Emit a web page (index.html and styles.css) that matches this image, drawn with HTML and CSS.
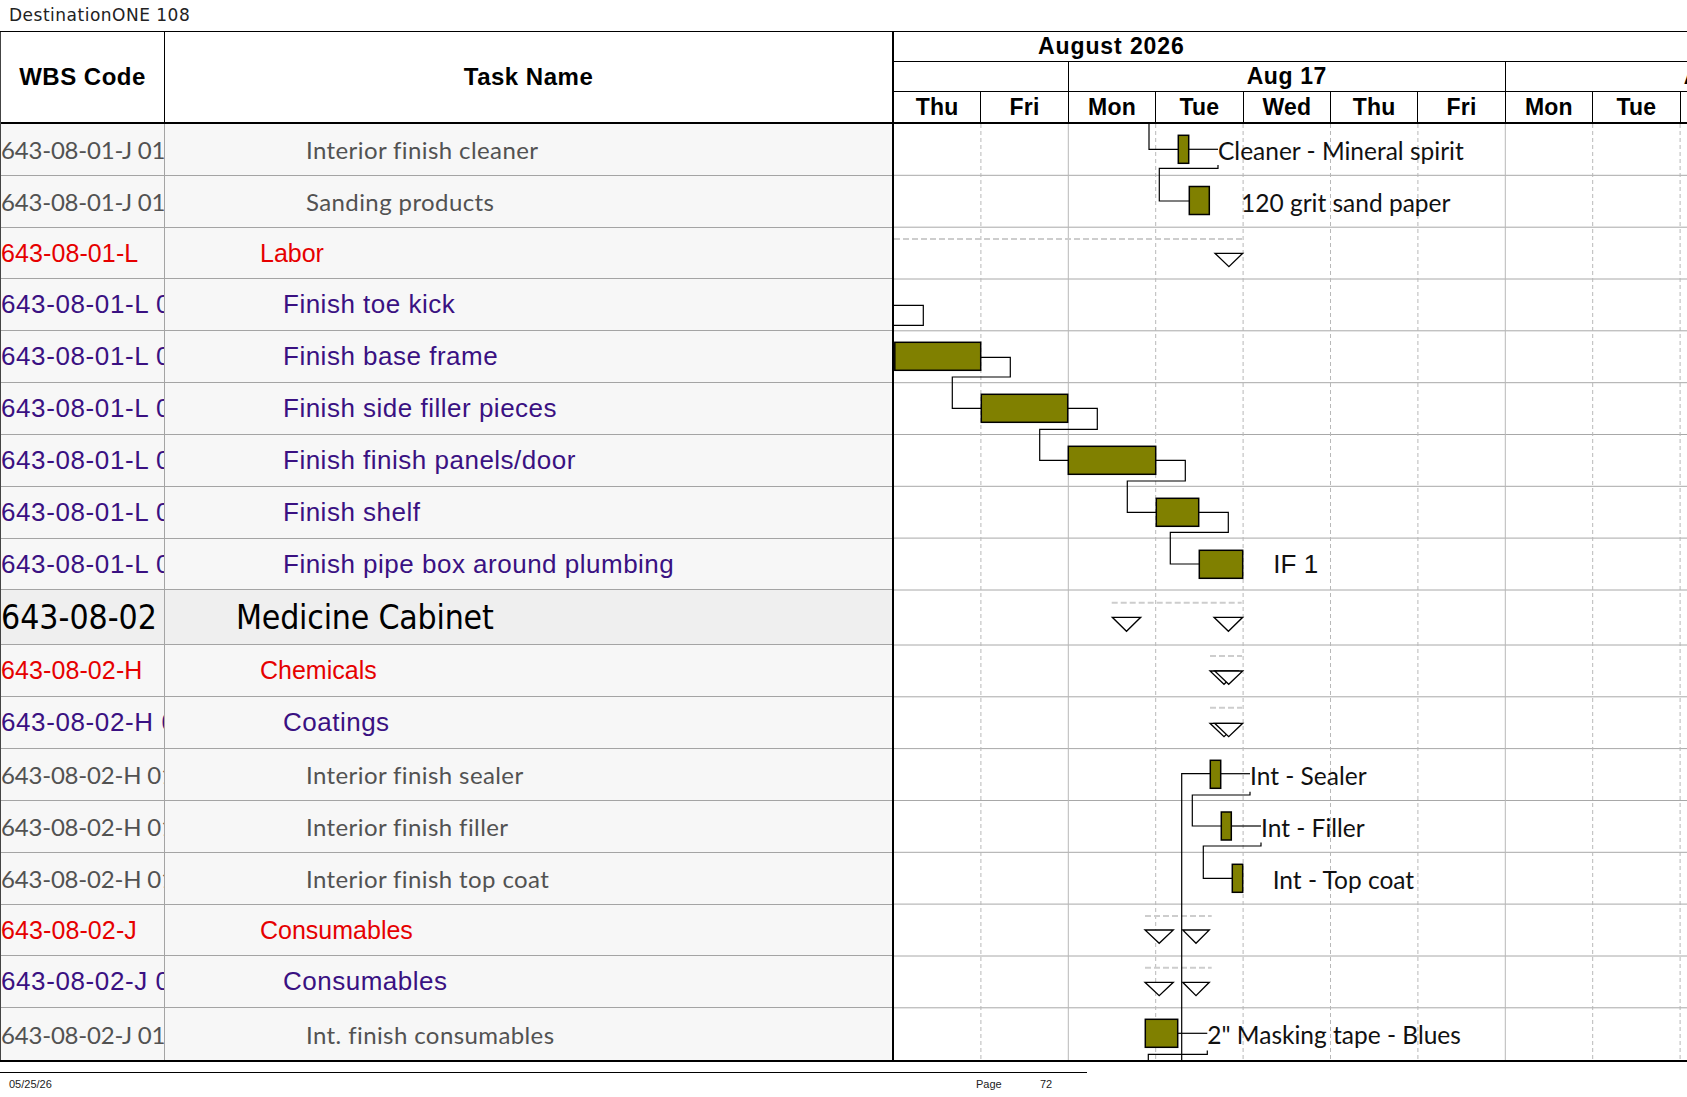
FILE: index.html
```html
<!DOCTYPE html>
<html lang="en">
<head>
<meta charset="utf-8">
<title>DestinationONE 108</title>
<link rel="stylesheet" href="styles.css">
</head>
<body>
<div class="page">
  <div class="title">DestinationONE 108</div>
  <div class="sheet">
    <div class="table">
      <div class="hdr">
        <div class="wbs">WBS Code</div>
        <div class="name">Task Name</div>
      </div>
      <div class="row gray"><div class="wbs">643-08-01-J 01</div><div class="name">Interior finish cleaner</div></div>
      <div class="row gray"><div class="wbs">643-08-01-J 01</div><div class="name">Sanding products</div></div>
      <div class="row red"><div class="wbs">643-08-01-L</div><div class="name">Labor</div></div>
      <div class="row purple"><div class="wbs">643-08-01-L 01</div><div class="name">Finish toe kick</div></div>
      <div class="row purple"><div class="wbs">643-08-01-L 02</div><div class="name">Finish base frame</div></div>
      <div class="row purple"><div class="wbs">643-08-01-L 03</div><div class="name">Finish side filler pieces</div></div>
      <div class="row purple"><div class="wbs">643-08-01-L 04</div><div class="name">Finish finish panels/door</div></div>
      <div class="row purple"><div class="wbs">643-08-01-L 05</div><div class="name">Finish shelf</div></div>
      <div class="row purple"><div class="wbs">643-08-01-L 06</div><div class="name">Finish pipe box around plumbing</div></div>
      <div class="row sum"><div class="wbs">643-08-02</div><div class="name">Medicine Cabinet</div></div>
      <div class="row red"><div class="wbs">643-08-02-H</div><div class="name">Chemicals</div></div>
      <div class="row purple"><div class="wbs">643-08-02-H 01</div><div class="name">Coatings</div></div>
      <div class="row gray"><div class="wbs">643-08-02-H 01</div><div class="name">Interior finish sealer</div></div>
      <div class="row gray"><div class="wbs">643-08-02-H 01</div><div class="name">Interior finish filler</div></div>
      <div class="row gray"><div class="wbs">643-08-02-H 01</div><div class="name">Interior finish top coat</div></div>
      <div class="row red"><div class="wbs">643-08-02-J</div><div class="name">Consumables</div></div>
      <div class="row purple"><div class="wbs">643-08-02-J 01</div><div class="name">Consumables</div></div>
      <div class="row gray"><div class="wbs">643-08-02-J 01</div><div class="name">Int. finish consumables</div></div>
    </div>
    <div class="chart">
      <div class="scale">
        <div class="month">August 2026</div>
        <div class="weeks">
          <div class="wk w2"></div>
          <div class="wk w5">Aug 17</div>
          <div class="wk w5">Aug 24</div>
        </div>
        <div class="days">
          <div class="day">Thu</div>
          <div class="day">Fri</div>
          <div class="day">Mon</div>
          <div class="day">Tue</div>
          <div class="day">Wed</div>
          <div class="day">Thu</div>
          <div class="day">Fri</div>
          <div class="day">Mon</div>
          <div class="day">Tue</div>
          <div class="day">Wed</div>
        </div>
      </div>
      <svg class="gantt" width="793" height="936" viewBox="894 124 793 936" xmlns="http://www.w3.org/2000/svg">
        <g class="hlines">
          <path d="M894 175.3H1687M894 227.2H1687M894 279H1687M894 330.8H1687M894 382.7H1687M894 434.5H1687M894 486.3H1687M894 538.1H1687M894 590H1687M894 645H1687M894 696.8H1687M894 748.6H1687M894 800.5H1687M894 852.3H1687M894 904.1H1687M894 956H1687M894 1007.8H1687"/>
        </g>
        <g class="vdash">
          <path d="M980.9 124V1060M1155.7 124V1060M1243.1 124V1060M1330.5 124V1060M1417.9 124V1060M1592.7 124V1060M1680.1 124V1060"/>
        </g>
        <g class="vsolid">
          <path d="M1068.3 124V1060M1505.3 124V1060"/>
        </g>
        <g class="sumline">
          <path d="M894 239H1243.3M1111.7 602.7H1241.7M1210 656H1242M1210 707.7H1242M1145 916H1211.7M1145 967.7H1211.7"/>
        </g>
        <g class="link">
          <path d="M1149 124V149.3H1178.3"/>
          <path d="M1188.7 149.3H1218"/>
          <path d="M1218 165V168.3H1159.3V201H1189.3"/>
          <path d="M894 305.3H923.3V325.3H894"/>
          <path d="M980.7 357.3H1010.3V377H952.3V408.3H981.3"/>
          <path d="M1067.7 408.3H1097.3V429.3H1039.7V460.3H1068.3"/>
          <path d="M1155.7 460.3H1185.3V481H1127.3V512.3H1156.3"/>
          <path d="M1198.7 512.3H1228.3V532.3H1170.3V564H1199.3"/>
          <path d="M1181.7 1060V773.7H1210.3"/>
          <path d="M1220.7 773.7H1250"/>
          <path d="M1250 791.7V795H1192.3V826H1221.3"/>
          <path d="M1231.3 826H1261"/>
          <path d="M1261 842.5V846H1203.3V878.3H1232.3"/>
          <path d="M1177.7 1033.3H1207.3"/>
          <path d="M1207.3 1050.5V1054.3H1148.3V1060"/>
        </g>
        <g class="bar">
          <rect x="1178.3" y="135.3" width="10.4" height="28"/>
          <rect x="1189.3" y="186.5" width="20" height="28"/>
          <rect x="894.8" y="342.3" width="85.9" height="28"/>
          <rect x="981.3" y="394.3" width="86.4" height="28"/>
          <rect x="1068.3" y="446.3" width="87.4" height="28"/>
          <rect x="1156.3" y="498.3" width="42.4" height="28"/>
          <rect x="1199.3" y="550.3" width="43.4" height="28"/>
          <rect x="1210.3" y="760.3" width="10.4" height="28"/>
          <rect x="1221.3" y="812" width="10" height="28"/>
          <rect x="1232.3" y="864.3" width="10.4" height="28"/>
          <rect x="1145.3" y="1019.3" width="32.4" height="28"/>
        </g>
        <g class="tri">
          <polygon points="1215,253.3 1242.7,253.3 1228.9,266.7"/>
          <polygon points="1112.3,617.3 1140.7,617.3 1126.5,631.3"/>
          <polygon points="1214,617.3 1242.7,617.3 1228.4,631.3"/>
          <polygon points="1210,671 1238,671 1224,684.3"/>
          <polygon points="1214.7,671 1242.7,671 1228.7,684.3"/>
          <polygon points="1210,723.3 1238,723.3 1224,736.7"/>
          <polygon points="1214.7,723.3 1242.7,723.3 1228.7,736.7"/>
          <polygon points="1145,930 1173.3,930 1159.2,943.3"/>
          <polygon points="1182.7,930 1209.3,930 1196,943.3"/>
          <polygon points="1145,982.3 1173.3,982.3 1159.2,995.7"/>
          <polygon points="1182.7,982.3 1209.3,982.3 1196,995.7"/>
        </g>
        <g class="lbl">
          <text x="1218" y="160">Cleaner - Mineral spirit</text>
          <text x="1241" y="211.8">120 grit sand paper</text>
          <text x="1250" y="785">Int - Sealer</text>
          <text x="1261" y="837">Int - Filler</text>
          <text x="1272.7" y="889">Int - Top coat</text>
          <text x="1207.3" y="1044">2" Masking tape - Blues</text>
        </g>
        <text class="lbl-arial" x="1273.3" y="573.3">IF 1</text>
      </svg>
    </div>
  </div>
  <div class="footer">
    <div class="fdate">05/25/26</div>
    <div class="fpage">Page</div>
    <div class="fnum">72</div>
  </div>
</div>
</body>
</html>
```

FILE: styles.css
```css
html, body {
  margin: 0;
  padding: 0;
  background: #ffffff;
}

.page {
  width: 1687px;
  height: 1097px;
  overflow: hidden;
  font-family: "Liberation Sans", Arial, sans-serif;
  color: #000;
}

.title {
  height: 31px;
  line-height: 31px;
  padding-left: 9px;
  font-family: "DejaVu Sans", sans-serif;
  font-size: 17px;
  letter-spacing: 0.5px;
  color: #222;
}

.sheet {
  display: flex;
  border-top: 1px solid #000;
  border-bottom: 2px solid #000;
}

/* ---------- left table ---------- */
.table {
  width: 894px;
  flex: none;
  box-sizing: border-box;
  border-left: 1px solid #444;
  border-right: 2px solid #000;
}

.hdr {
  display: flex;
  height: 92px;
  box-sizing: border-box;
  border-bottom: 2px solid #000;
  background: #fff;
  font-weight: bold;
  font-size: 24px;
  letter-spacing: 0.5px;
}

.hdr .wbs,
.hdr .name {
  display: flex;
  align-items: center;
  justify-content: center;
}

.hdr .wbs {
  width: 164px;
  flex: none;
  box-sizing: border-box;
  border-right: 1px solid #000;
}

.hdr .name {
  flex: 1;
}

.row {
  display: flex;
  height: 51.83px;
  box-sizing: border-box;
  border-bottom: 1px solid #a4a4a4;
  background: #f7f7f7;
}

.row:last-child {
  border-bottom: none;
}

.row .wbs {
  width: 164px;
  flex: none;
  box-sizing: border-box;
  border-right: 1px solid #a4a4a4;
  overflow: hidden;
  white-space: nowrap;
  display: flex;
  align-items: center;
}

.row .name {
  flex: 1;
  min-width: 0;
  overflow: hidden;
  white-space: nowrap;
  display: flex;
  align-items: center;
}

.row.gray {
  font-family: Lato, "Carlito", sans-serif;
  font-size: 24px;
  color: #525252;
}

.row.gray .wbs {
  letter-spacing: -0.2px;
}

.row.gray .name {
  padding-left: 141px;
  letter-spacing: 0.4px;
}

.row.red {
  font-size: 25px;
  color: #e60000;
}

.row.red .wbs {
  letter-spacing: 0.1px;
}

.row.red .name {
  padding-left: 95px;
}

.row.purple {
  font-size: 26px;
  color: #3a1182;
}

.row.purple .wbs {
  letter-spacing: 0.6px;
}

.row.purple .name {
  padding-left: 118px;
  letter-spacing: 0.5px;
}

.row.sum {
  height: 55px;
  background: #efefef;
  font-family: "DejaVu Sans Condensed", "DejaVu Sans", sans-serif;
  font-stretch: 87.5%;
  font-size: 33.5px;
  color: #000;
}

.row.sum .name {
  padding-left: 71px;
  letter-spacing: -0.2px;
}

/* ---------- chart ---------- */
.chart {
  flex: 1;
  min-width: 0;
  overflow: hidden;
}

.scale {
  background: #fff;
  font-weight: bold;
  font-size: 23px;
}

.month {
  height: 30px;
  box-sizing: border-box;
  border-bottom: 1px solid #000;
  line-height: 29px;
  padding-left: 144px;
  letter-spacing: 0.9px;
  white-space: nowrap;
}

.weeks {
  display: flex;
  height: 30px;
  box-sizing: border-box;
  border-bottom: 1px solid #000;
}

.wk {
  flex: none;
  box-sizing: border-box;
  border-right: 1px solid #000;
  text-align: center;
  line-height: 29px;
  letter-spacing: 0.6px;
  white-space: nowrap;
}

.wk.w2 {
  width: 174.8px;
}

.wk.w5 {
  width: 437px;
}

.days {
  display: flex;
  height: 32px;
  box-sizing: border-box;
  border-bottom: 2px solid #000;
}

.day {
  flex: none;
  width: 87.4px;
  box-sizing: border-box;
  border-right: 1px solid #000;
  text-align: center;
  line-height: 31px;
  letter-spacing: 0.2px;
}

.gantt {
  display: block;
  background: #fff;
}

.hlines path {
  stroke: #a8a8a8;
  stroke-width: 1;
  fill: none;
}

.vdash path {
  stroke: #b8b8b8;
  stroke-width: 1;
  stroke-dasharray: 4 3;
  fill: none;
}

.vsolid path {
  stroke: #b8b8b8;
  stroke-width: 1;
  fill: none;
}

.sumline path {
  stroke: #cdcdcd;
  stroke-width: 2;
  stroke-dasharray: 6 3;
  fill: none;
}

.link path {
  stroke: #000;
  stroke-width: 1.2;
  fill: none;
}

.bar rect {
  fill: #808000;
  stroke: #000;
  stroke-width: 1.5;
}

.tri polygon {
  fill: #fff;
  stroke: #000;
  stroke-width: 1.3;
}

.lbl text {
  font-family: Lato, "Carlito", sans-serif;
  font-size: 24.5px;
  fill: #111;
}

.lbl-arial {
  font-family: "Liberation Sans", Arial, sans-serif;
  font-size: 26px;
  fill: #111;
}

/* ---------- footer ---------- */
.footer {
  display: grid;
  grid-template-columns: 976px 64px 47px;
  width: 1087px;
  margin-top: 10px;
  border-top: 1px solid #000;
  padding-top: 5px;
  font-size: 11px;
  line-height: 13px;
  color: #222;
}

.fdate {
  padding-left: 9px;
}
```
